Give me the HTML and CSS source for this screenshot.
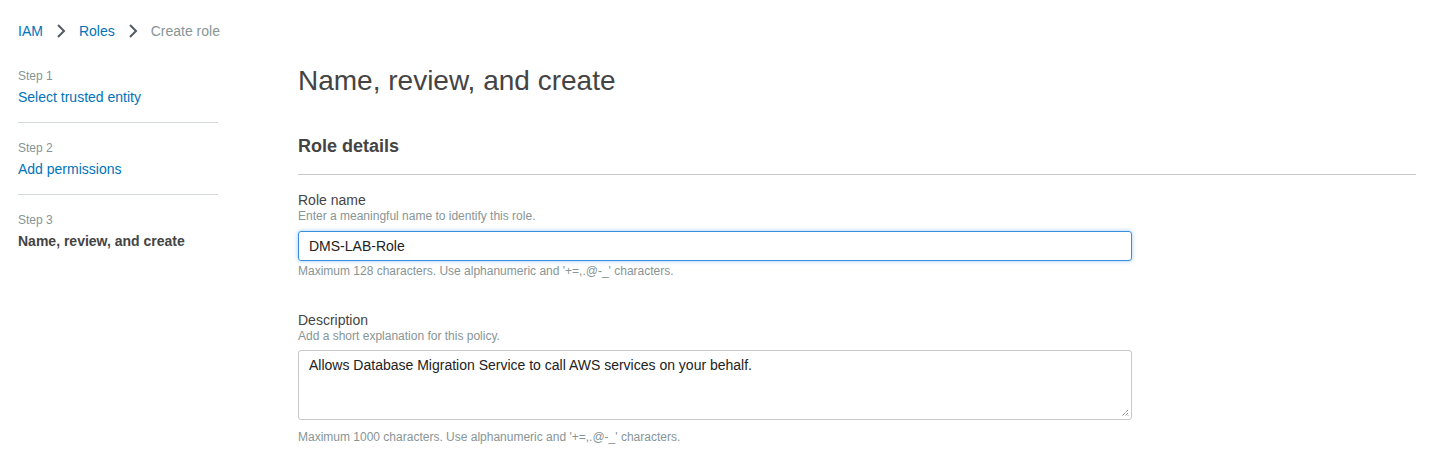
FILE: index.html
```html
<!DOCTYPE html>
<html>
<head>
<meta charset="utf-8">
<link rel="stylesheet" href="styles.css">
</head>
<body>
<nav class="crumbs">
  <a class="crumb-link">IAM</a>
  <svg class="chev" width="16" height="16" viewBox="0 0 16 16"><path d="M5 2 L11 8 L5 14" fill="none" stroke="#545b64" stroke-width="2"/></svg>
  <a class="crumb-link">Roles</a>
  <svg class="chev" width="16" height="16" viewBox="0 0 16 16"><path d="M5 2 L11 8 L5 14" fill="none" stroke="#545b64" stroke-width="2"/></svg>
  <span class="crumb-current">Create role</span>
</nav>
<div class="layout">
  <aside class="steps">
    <div class="step">
      <div class="step-num">Step 1</div>
      <a class="step-link">Select trusted entity</a>
    </div>
    <div class="step">
      <div class="step-num">Step 2</div>
      <a class="step-link">Add permissions</a>
    </div>
    <div class="step last">
      <div class="step-num">Step 3</div>
      <div class="step-active">Name, review, and create</div>
    </div>
  </aside>
  <main class="main">
    <h1 class="title">Name, review, and create</h1>
    <h2 class="section">Role details</h2>
    <div class="field">
      <div class="label">Role name</div>
      <div class="hint">Enter a meaningful name to identify this role.</div>
      <div class="input focused">DMS-LAB-Role</div>
      <div class="constraint">Maximum 128 characters. Use alphanumeric and '+=,.@-_' characters.</div>
    </div>
    <div class="field second">
      <div class="label">Description</div>
      <div class="hint">Add a short explanation for this policy.</div>
      <div class="textarea">Allows Database Migration Service to call AWS services on your behalf.
        <svg class="grip" width="8" height="8" viewBox="0 0 8 8"><path d="M7 1 L1 7 M7 4 L4 7 M7 6.5 L6.5 7" stroke="#555" stroke-width="1" stroke-dasharray="1 1"/></svg>
      </div>
      <div class="constraint last">Maximum 1000 characters. Use alphanumeric and '+=,.@-_' characters.</div>
    </div>
  </main>
</div>
</body>
</html>
```

FILE: styles.css
```css
* { box-sizing: border-box; }
html, body { margin: 0; padding: 0; background: #fff; }
body {
  font-family: "Liberation Sans", Arial, Helvetica, sans-serif;
  color: #444;
  font-size: 14px;
}
.crumbs {
  display: flex;
  align-items: center;
  padding: 21px 0 0 18px;
  height: 41px;
  line-height: 20px;
}
.crumb-link { color: #0073bb; }
.chev { margin: 0 10px; display: block; }
.crumb-current { color: #879596; }

.layout {
  display: flex;
  align-items: flex-start;
  padding: 22px 31px 0 18px;
  gap: 80px;
}
.steps {
  width: 200px;
  flex: none;
  padding-top: 5px;
}
.step {
  padding: 0 0 15px;
  border-bottom: 1px solid #d5dbdb;
  margin-bottom: 17px;
}
.step.last { border-bottom: none; }
.step-num {
  font-size: 12px;
  line-height: 16px;
  color: #879596;
  margin-bottom: 3px;
}
.step-link {
  display: block;
  color: #0073bb;
  line-height: 20px;
}
.step-active {
  font-weight: bold;
  line-height: 20px;
  color: #444;
}
.main { flex: 1; }
.title {
  margin: 0;
  font-size: 28px;
  line-height: 36px;
  font-weight: normal;
  color: #444;
}
.section {
  margin: 36px 0 0;
  font-size: 18px;
  line-height: 22px;
  font-weight: bold;
  padding-bottom: 17px;
  border-bottom: 1px solid #c8c8c8;
  color: #444;
}
.field { padding-top: 16px; width: 834px; }
.field.second { padding-top: 33px; }
.label { line-height: 18px; }
.hint {
  font-size: 12px;
  line-height: 14px;
  color: #879596;
}
.input {
  margin-top: 8px;
  height: 30px;
  border: 1px solid #3b8de0;
  border-radius: 3px;
  padding: 0 10px;
  line-height: 28px;
  color: #222;
  box-shadow: 0 0 4px rgba(0, 125, 230, 0.4);
}
.constraint {
  margin-top: 3px;
  font-size: 12px;
  line-height: 14px;
  color: #879596;
}
.constraint.last { margin-top: 10px; }
.textarea {
  position: relative;
  margin-top: 7px;
  height: 70px;
  border: 1px solid #c8c8c8;
  border-radius: 3px;
  padding: 4px 10px;
  line-height: 20px;
  color: #222;
}
.grip {
  position: absolute;
  right: 2px;
  bottom: 2px;
}
```
